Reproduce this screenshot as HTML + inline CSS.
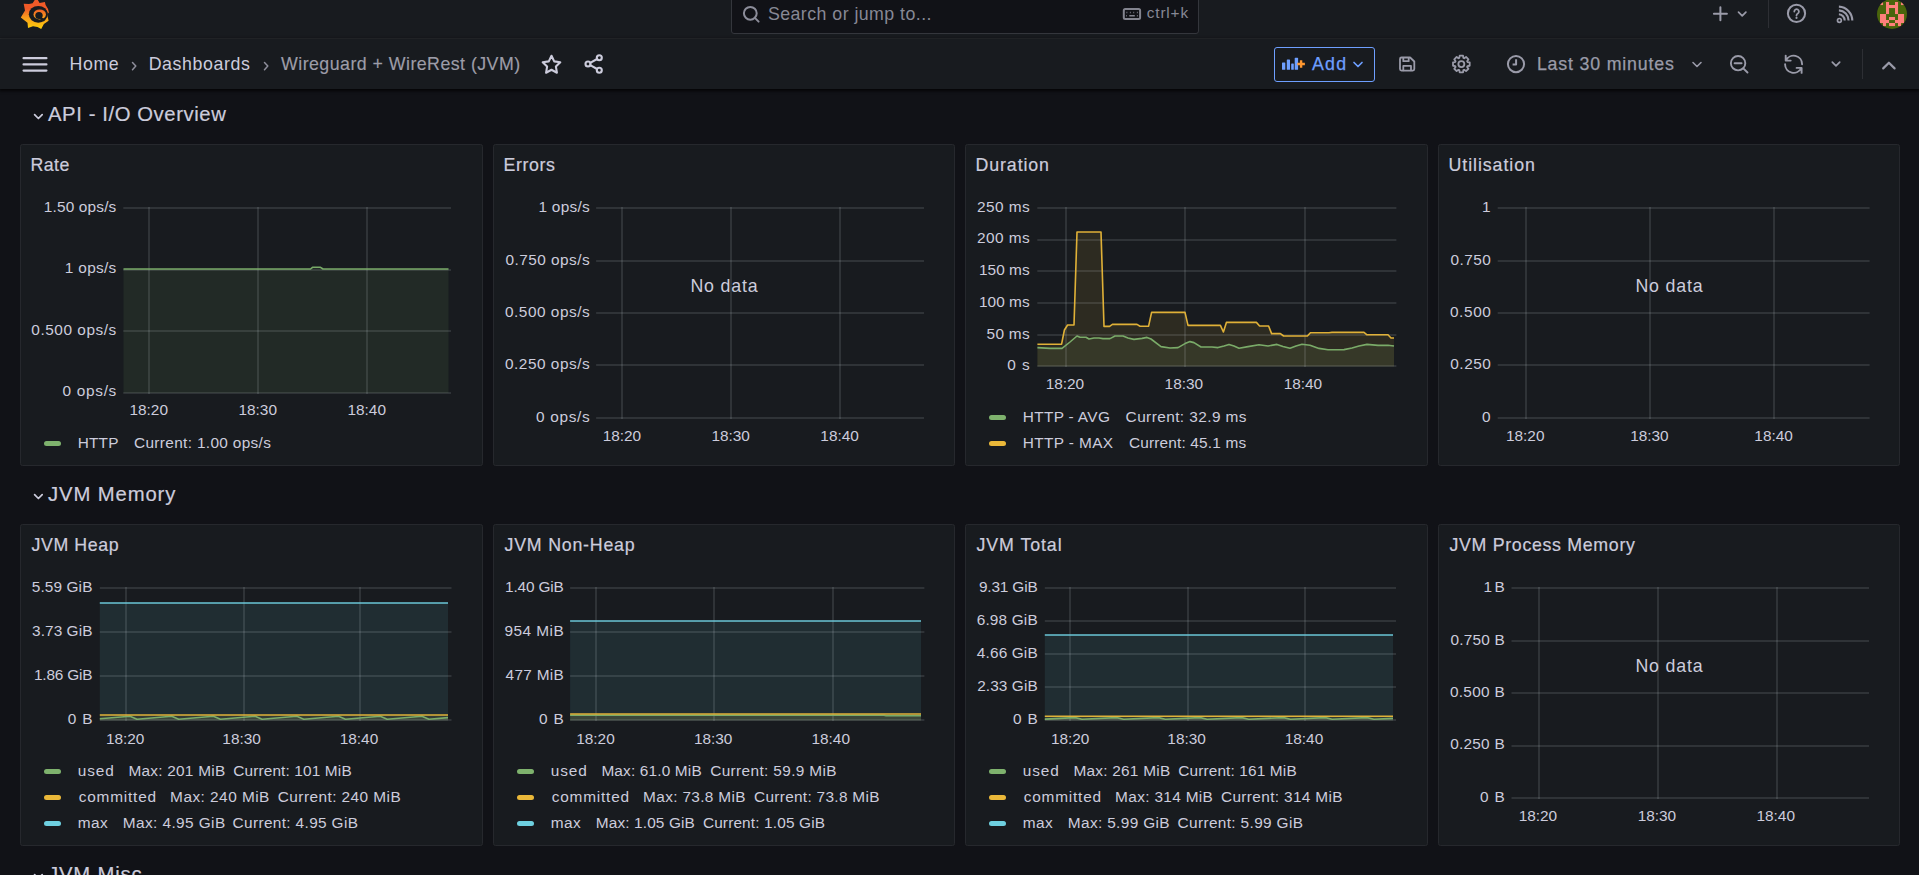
<!DOCTYPE html>
<html lang="en">
<head>
<meta charset="utf-8">
<title>Wireguard + WireRest (JVM) - Dashboards - Grafana</title>
<style>
*{box-sizing:border-box;margin:0;padding:0}
html,body{width:1919px;height:875px;overflow:hidden;background:#111217}
body{font-family:"Liberation Sans",sans-serif;color:#ccccdc;position:relative;-webkit-font-smoothing:antialiased}
.abs{position:absolute}
.t{position:absolute;white-space:pre;line-height:1}
#top{position:absolute;left:0;top:0;width:1919px;height:39px;background:#181b1f;border-bottom:1px solid #2e3035}
#nav{position:absolute;left:0;top:39px;width:1919px;height:50px;background:#181b1f;box-shadow:0 1px 3px 1px rgba(0,0,0,.75)}
#search{position:absolute;left:731px;top:-6px;width:468px;height:40px;background:#111217;border:1px solid #34363c;border-radius:3px}
.panel{position:absolute;background:#181b1f;border:1px solid #26282d;border-radius:2.5px}
.panel h2{position:absolute;font-size:17.8px;font-weight:400;line-height:18px;white-space:pre;-webkit-text-stroke:.2px #ccccdc}
h1,h2{font-weight:400}
svg{position:absolute;left:0;top:0;overflow:visible}
svg text{font-family:"Liberation Sans",sans-serif;font-size:15.4px;fill:#ccccdc}
.lg{position:absolute;font-size:15.4px;line-height:18px;white-space:pre}
.lg span{line-height:18px}
.lg i{position:absolute;height:5px;width:17px;border-radius:2.5px}
.nodata{position:absolute;font-size:17.8px;line-height:20px;white-space:pre}
.ic{position:absolute;overflow:visible;fill:none;stroke:#9a9ba9;stroke-width:1.9;stroke-linecap:round;stroke-linejoin:round}
</style>
</head>
<body>
<header id="top">
<svg class="abs" style="left:15px;top:0" width="40" height="35" viewBox="15 0 40 35">
<defs><linearGradient id="gl" gradientUnits="userSpaceOnUse" x1="0" y1="29" x2="0" y2="0"><stop offset="0" stop-color="#fcd00a"/><stop offset="0.4" stop-color="#f99b1c"/><stop offset="0.700" stop-color="#f05a28"/></linearGradient></defs>
<path fill="url(#gl)" d="M36.4 -2.5 L39.6 3 L44.9 1.9 L45.6 5 Q48.6 8.600 49.100 13.500 L47.500 12 L47.400 15.500 L48.600 20.800 L43.900 24 L41.200 29 L37.500 26.900 L33 26.200 L28 27.900 L27.500 22.800 L20.800 17.400 L25 10.600 L23.700 3.700 L29 4.100 L32.600 3.200 Z"/>
<ellipse cx="38.300" cy="14.300" rx="9.500" ry="8.400" fill="#181b1f"/>
<ellipse cx="39.700" cy="14.400" rx="6.200" ry="5" fill="url(#gl)"/>
<ellipse cx="39" cy="15.500" rx="3.700" ry="3.500" fill="#181b1f"/>
<path d="M40 17.800 L44.500 20.500" stroke="#181b1f" stroke-width="2.200" fill="none"/>
</svg>
<div id="search">
</div>
</header>
<svg class="ic" style="left:740px;top:0;stroke:#8c8d9a;stroke-width:2" width="24" height="26" viewBox="740 0 24 26"><circle cx="750.300" cy="13.300" r="6.400"/><path d="M754.900 17.900L758.600 21.600"/></svg>
<div class="t " style="top:6.13px;font-size:17.8px;color:#878895;left:767.90px;letter-spacing:0.446px;">Search or jump to...</div>
<svg class="ic" style="left:1120px;top:4px;stroke:#83848f;stroke-width:2" width="24" height="20" viewBox="1120 4 24 20"><rect x="1123.800" y="9.100" width="16.300" height="9.800" rx="1.500"/><path d="M1126.500 12.500h.8M1129.900 12.500h.8M1133.350 12.500h.8M1136.900 12.500h.8M1126.300 15.800h.7M1129.300 15.800h5.500M1136.900 15.800h.8" stroke-width="1.400" stroke-linecap="butt"/></svg>
<div class="t " style="top:5.36px;font-size:15.4px;color:#878895;left:1146.75px;letter-spacing:0.839px;">ctrl+k</div>
<svg class="ic" style="left:1700px;top:0;stroke-width:2" width="160" height="30" viewBox="1700 0 160 30"><path d="M1720.400 7.200v13M1713.900 13.700h13"/><path d="M1738.500 12.200l3.700 3.700 3.700-3.700" stroke-width="1.700"/><circle cx="1796.500" cy="13.400" r="8.600"/><path d="M1794.300 11.500a2.300 2.300 0 1 1 3.500 2c-.9.500-1.300 1-1.300 2.100" stroke-width="1.800"/><path d="M1796.500 17.800v.1" stroke-width="2.100"/><circle cx="1839.400" cy="20.400" r="1.900" stroke-width="1.700"/><path d="M1838.900 6.600a14 14 0 0 1 13.400 14M1838.900 10.400a10.200 10.200 0 0 1 9.700 10.200M1838.900 14.300a6.300 6.300 0 0 1 5.800 6.300" stroke-linecap="butt" stroke-width="2.100"/></svg>
<div class="abs" style="left:1768px;top:0;width:1px;height:28px;background:#2d2f34"></div>
<svg class="abs" style="left:1877px;top:-1px" width="30" height="30" viewBox="0 0 30 30"><defs><clipPath id="av"><circle cx="15" cy="15" r="15"/></clipPath></defs>
<g clip-path="url(#av)"><rect width="30" height="30" fill="#4a650c"/><g fill="#ff807b"><rect x="3" y="3" width="3.050" height="3.050"/><rect x="9" y="3" width="3.050" height="3.050"/><rect x="18" y="3" width="3.050" height="3.050"/><rect x="24" y="3" width="3.050" height="3.050"/><rect x="9" y="6" width="3.050" height="3.050"/><rect x="12" y="6" width="3.050" height="3.050"/><rect x="15" y="6" width="3.050" height="3.050"/><rect x="18" y="6" width="3.050" height="3.050"/><rect x="9" y="9" width="3.050" height="3.050"/><rect x="18" y="9" width="3.050" height="3.050"/><rect x="9" y="12" width="3.050" height="3.050"/><rect x="18" y="12" width="3.050" height="3.050"/><rect x="3" y="15" width="3.050" height="3.050"/><rect x="6" y="15" width="3.050" height="3.050"/><rect x="21" y="15" width="3.050" height="3.050"/><rect x="24" y="15" width="3.050" height="3.050"/><rect x="3" y="18" width="3.050" height="3.050"/><rect x="6" y="18" width="3.050" height="3.050"/><rect x="12" y="18" width="3.050" height="3.050"/><rect x="15" y="18" width="3.050" height="3.050"/><rect x="21" y="18" width="3.050" height="3.050"/><rect x="24" y="18" width="3.050" height="3.050"/><rect x="3" y="21" width="3.050" height="3.050"/><rect x="6" y="21" width="3.050" height="3.050"/><rect x="9" y="21" width="3.050" height="3.050"/><rect x="18" y="21" width="3.050" height="3.050"/><rect x="21" y="21" width="3.050" height="3.050"/><rect x="24" y="21" width="3.050" height="3.050"/><rect x="6" y="24" width="3.050" height="3.050"/><rect x="12" y="24" width="3.050" height="3.050"/><rect x="15" y="24" width="3.050" height="3.050"/><rect x="21" y="24" width="3.050" height="3.050"/></g></g></svg>
<nav id="nav"></nav>
<svg class="ic" style="left:22px;top:55px;stroke:#ccccdc;stroke-width:2.300" width="26" height="19" viewBox="22 55 26 19"><path d="M23.600 58.200H46.400M23.600 64.400H46.400M23.600 70.600H46.400"/></svg>
<div class="t " style="top:56.13px;font-size:17.8px;color:#ccccdc;left:69.60px;letter-spacing:0.536px;">Home</div>
<svg class="ic" style="left:131px;top:60.500px;stroke:#8e8e9b;stroke-width:1.500" width="7" height="11" viewBox="0 0 7 11"><path d="M1.500 1.500l3.300 3.600-3.300 3.600"/></svg>
<div class="t " style="top:56.13px;font-size:17.8px;color:#ccccdc;left:148.70px;letter-spacing:0.59px;">Dashboards</div>
<svg class="ic" style="left:263px;top:60.500px;stroke:#8e8e9b;stroke-width:1.500" width="7" height="11" viewBox="0 0 7 11"><path d="M1.500 1.500l3.300 3.600-3.300 3.600"/></svg>
<div class="t " style="top:56.13px;font-size:17.8px;color:#9d9da8;left:281.00px;letter-spacing:0.455px;-webkit-text-stroke:0.15px #9d9da8;">Wireguard + WireRest (JVM)</div>
<svg class="ic" style="left:541px;top:53.5px;stroke:#ccccdc;stroke-width:2.100" width="21" height="21" viewBox="0 0 21 21"><path d="M10.5 1.8l2.7 5.6 6.1.9-4.4 4.3 1 6.1-5.4-2.9-5.4 2.9 1-6.1-4.4-4.300 6.100-.9z"/></svg>
<svg class="ic" style="left:584px;top:54px;stroke:#ccccdc;stroke-width:2.100" width="20" height="20" viewBox="0 0 20 20"><circle cx="15.3" cy="3.800" r="2.500"/><circle cx="4" cy="10" r="2.500"/><circle cx="15.300" cy="16.200" r="2.500"/><path d="M6.200 8.800l6.900-3.800M6.200 11.200l6.900 3.800"/></svg>
<div class="abs" style="left:1274px;top:47px;width:101px;height:35px;border:1px solid #6e9fff;border-radius:3px"></div>
<svg class="abs" style="left:1280px;top:55px" width="28" height="18" viewBox="1280 55 28 18"><g fill="#6e9fff"><rect x="1282" y="62.400" width="3.300" height="7.400" rx=".6"/><rect x="1286.800" y="59.500" width="3.200" height="10.300" rx=".6"/><rect x="1291.200" y="63.500" width="2.600" height="6.300" rx=".6"/><rect x="1294.700" y="57.800" width="3.400" height="12" rx=".6"/></g><path d="M1301.100 60.200v7.600M1297.300 64h7.600" stroke="#ff9830" stroke-width="2.400" fill="none"/></svg>
<div class="t " style="top:56.13px;font-size:17.8px;color:#6e9fff;left:1312.00px;letter-spacing:1.225px;-webkit-text-stroke:0.25px #6e9fff;">Add</div>
<svg class="ic" style="left:1352.500px;top:60.500px;stroke:#6e9fff;stroke-width:1.7" width="10" height="7" viewBox="0 0 10 7"><path d="M1 1.500l4 4 4-4"/></svg>
<svg class="ic" style="left:1396px;top:54px;stroke-width:1.800" width="22" height="20" viewBox="1396 54 22 20"><path d="M1400 59a1.500 1.500 0 0 1 1.500-1.500h8.600l4.200 4v7.600a1.500 1.500 0 0 1-1.500 1.500h-11.300a1.500 1.500 0 0 1-1.500-1.500z"/><path d="M1403.300 57.800v3.400h5.400v-3.400M1403.300 70.300v-4.400h7.700v4.400"/></svg>
<svg class="ic" style="left:1450px;top:52px;stroke-width:1.800" width="24" height="24" viewBox="1450 52 24 24"><circle cx="1461.350" cy="64.050" r="3"/><path d="M1459.32 57.93 L1459.66 55.72 L1463.04 55.72 L1463.38 57.93 L1464.24 58.29 L1466.05 56.97 L1468.43 59.35 L1467.11 61.16 L1467.47 62.02 L1469.68 62.36 L1469.68 65.74 L1467.47 66.08 L1467.11 66.94 L1468.43 68.75 L1466.05 71.13 L1464.24 69.81 L1463.38 70.17 L1463.04 72.38 L1459.66 72.38 L1459.32 70.17 L1458.46 69.81 L1456.65 71.13 L1454.27 68.75 L1455.59 66.94 L1455.23 66.08 L1453.02 65.74 L1453.02 62.36 L1455.23 62.02 L1455.59 61.16 L1454.27 59.35 L1456.65 56.97 L1458.46 58.29Z"/></svg>
<svg class="ic" style="left:1500px;top:50px;stroke-width:2" width="32" height="28" viewBox="1500 50 32 28"><circle cx="1516" cy="64.100" r="8.100"/><path d="M1516.100 59.200v5.400h-3.500" stroke-linecap="butt"/></svg>
<div class="t " style="top:56.13px;font-size:17.8px;color:#9a9ba9;left:1536.90px;letter-spacing:0.819px;-webkit-text-stroke:0.25px #9a9ba9;">Last 30 minutes</div>
<svg class="ic" style="left:1692px;top:60.500px;stroke-width:1.600" width="10" height="7" viewBox="0 0 10 7"><path d="M1 1.500l4 4 4-4"/></svg>
<svg class="ic" style="left:1720px;top:40px;stroke-width:1.900" width="190" height="48" viewBox="1720 40 190 48"><circle cx="1738.100" cy="63.200" r="7.200"/><path d="M1743.300 68.400l4.200 4.100M1734.600 63.200h7"/><path d="M1785.950 60.500A8.500 8.500 0 0 1 1802.100 64.200M1785.700 55.600V60.600H1790.700M1801.300 67.900A8.500 8.500 0 0 1 1785.100 64.200M1801.600 72.900V67.900H1796.600"/><path d="M1832.300 62.100l3.700 3.700 3.700-3.700" stroke-width="1.700"/><path d="M1883.200 68.400l5.700-5.700 5.700 5.700" stroke-width="2.200"/></svg>
<div class="abs" style="left:1862px;top:49px;width:1px;height:30px;background:#2d2f34"></div>
<main>
<svg class="ic" style="left:32.500px;top:112.8px;stroke:#ccccdc;stroke-width:1.700" width="11" height="8" viewBox="0 0 11 8"><path d="M1.600 1.600l3.800 3.900 3.800-3.900"/></svg>
<h1 class="t " style="top:103.62px;font-size:20.3px;color:#ccccdc;left:48.00px;letter-spacing:0.581px;-webkit-text-stroke:0.2px #ccccdc;">API - I/O Overview</h1>
<svg class="ic" style="left:32.500px;top:492.8px;stroke:#ccccdc;stroke-width:1.700" width="11" height="8" viewBox="0 0 11 8"><path d="M1.600 1.600l3.800 3.900 3.800-3.900"/></svg>
<h1 class="t " style="top:483.62px;font-size:20.3px;color:#ccccdc;left:48.00px;letter-spacing:0.883px;-webkit-text-stroke:0.2px #ccccdc;">JVM Memory</h1>
<svg class="ic" style="left:32.500px;top:872.8px;stroke:#ccccdc;stroke-width:1.700" width="11" height="8" viewBox="0 0 11 8"><path d="M1.600 1.600l3.800 3.900 3.800-3.900"/></svg>
<h1 class="t " style="top:863.62px;font-size:20.3px;color:#ccccdc;left:48.00px;letter-spacing:0.809px;-webkit-text-stroke:0.2px #ccccdc;">JVM Misc</h1>
<section class="panel" style="left:20px;top:144px;width:463px;height:322px">
<h2 style="left:9.50px;top:10.93px;letter-spacing:0.410px">Rate</h2>
<svg width="460" height="320" viewBox="21 145 460 320">
<path d="M123.5 269.0 L310.5 269.0 L312.5 267.3 L320.5 267.3 L323.0 269.0 L448.5 269.0 L448.5 392.9 L123.5 392.9Z" fill="#7eb26d" fill-opacity="0.1"/>
<path d="M123.3 208H451.0M123.3 270H451.0M123.3 331H451.0M123.3 393H451.0" stroke="rgba(235,245,255,0.108)" stroke-width="2" fill="none"/>
<path d="M149 207V394M258 207V394M367 207V394" stroke="rgba(235,245,255,0.108)" stroke-width="2" fill="none"/>
<path d="M123.5 269.0 L310.5 269.0 L312.5 267.3 L320.5 267.3 L323.0 269.0 L448.5 269.0" fill="none" stroke="#7eb26d" stroke-opacity="0.950" stroke-width="1.6" stroke-linejoin="round"/>
<text x="116.3" y="211.9" text-anchor="end" textLength="72.5">1.50 ops/s</text>
<text x="116.3" y="273.4" text-anchor="end" textLength="51.5">1 ops/s</text>
<text x="116.3" y="334.9" text-anchor="end" textLength="85.0">0.500 ops/s</text>
<text x="116.3" y="396.3" text-anchor="end" textLength="53.7">0 ops/s</text>
<text x="129.55" y="415.1" textLength="38.400">18:20</text>
<text x="238.55" y="415.1" textLength="38.400">18:30</text>
<text x="347.55" y="415.1" textLength="38.400">18:40</text>
</svg>
<div class="lg" style="left:0;top:289.5px"><i style="background:#7eb26d;left:23.0px;top:6.500px"></i><span class="abs" style="left:56.75px;top:-0.640px;letter-spacing:0.161px">HTTP</span><span class="abs" style="left:113.00px;top:-0.640px;letter-spacing:0.334px">Current: 1.00 ops/s</span></div>
</section>
<section class="panel" style="left:493px;top:144px;width:462px;height:322px">
<h2 style="left:9.50px;top:10.93px;letter-spacing:0.577px">Errors</h2>
<svg width="460" height="320" viewBox="494 145 460 320">
<path d="M596.1 208H924.0M596.1 261H924.0M596.1 313H924.0M596.1 365H924.0M596.1 418H924.0" stroke="rgba(235,245,255,0.108)" stroke-width="2" fill="none"/>
<path d="M622 207V419M731 207V419M840 207V419" stroke="rgba(235,245,255,0.108)" stroke-width="2" fill="none"/>
<text x="589.7" y="211.9" text-anchor="end" textLength="51.3">1 ops/s</text>
<text x="589.7" y="264.6" text-anchor="end" textLength="84.2">0.750 ops/s</text>
<text x="589.7" y="316.9" text-anchor="end" textLength="84.7">0.500 ops/s</text>
<text x="589.7" y="369.3" text-anchor="end" textLength="84.7">0.250 ops/s</text>
<text x="589.7" y="421.7" text-anchor="end" textLength="53.7">0 ops/s</text>
<text x="602.65" y="441.2" textLength="38.400">18:20</text>
<text x="711.45" y="441.2" textLength="38.400">18:30</text>
<text x="820.35" y="441.2" textLength="38.400">18:40</text>
</svg>
<div class="nodata" style="left:196.40px;top:130.63px;letter-spacing:0.819px">No data</div>
</section>
<section class="panel" style="left:965px;top:144px;width:463px;height:322px">
<h2 style="left:9.50px;top:10.93px;letter-spacing:0.897px">Duration</h2>
<svg width="460" height="320" viewBox="966 145 460 320">
<path d="M1037.4 347.6 L1050.0 348.4 L1062.0 348.4 L1070.0 342.0 L1077.0 336.0 L1080.0 337.2 L1086.0 337.2 L1089.0 339.0 L1094.0 338.0 L1099.0 338.0 L1103.0 338.6 L1110.0 338.6 L1115.0 336.0 L1123.0 336.0 L1128.0 338.0 L1134.0 339.4 L1142.0 338.4 L1147.0 337.4 L1151.0 339.0 L1161.0 346.6 L1170.0 348.0 L1178.0 347.6 L1185.0 343.6 L1190.0 341.6 L1194.0 342.6 L1201.0 347.0 L1212.0 347.0 L1218.0 347.6 L1224.0 346.0 L1229.0 344.4 L1234.0 346.0 L1239.0 348.2 L1248.0 346.6 L1259.0 344.8 L1268.0 346.0 L1277.0 344.4 L1283.0 346.4 L1290.0 348.2 L1296.0 346.0 L1302.0 344.2 L1310.0 345.2 L1319.0 348.4 L1328.0 349.8 L1344.0 349.6 L1352.0 348.0 L1359.0 346.0 L1367.0 344.4 L1378.0 345.4 L1388.0 345.2 L1394.0 346.0 L1394.0 366.4 L1037.4 366.4Z" fill="#7eb26d" fill-opacity="0.1"/>
<path d="M1037.4 344.2 L1061.6 344.2 L1064.4 330.0 L1067.6 325.0 L1074.0 325.0 L1077.0 232.0 L1101.0 232.0 L1104.0 326.4 L1109.6 326.4 L1112.4 324.4 L1137.0 324.4 L1140.0 326.2 L1148.6 326.2 L1151.6 312.4 L1185.0 312.4 L1188.0 325.4 L1220.4 325.4 L1223.4 332.0 L1226.4 322.4 L1256.4 322.4 L1259.6 326.0 L1268.6 326.0 L1271.6 333.6 L1280.4 333.6 L1283.6 336.0 L1307.4 336.0 L1310.4 332.8 L1329.0 332.8 L1332.0 332.4 L1364.0 332.4 L1367.0 334.8 L1388.0 334.8 L1391.0 338.0 L1394.0 338.0 L1394.0 366.4 L1037.4 366.4Z" fill="#eab839" fill-opacity="0.1"/>
<path d="M1037.3 208H1396.4M1037.3 240H1396.4M1037.3 271H1396.4M1037.3 303H1396.4M1037.3 335H1396.4M1037.3 366H1396.4" stroke="rgba(235,245,255,0.108)" stroke-width="2" fill="none"/>
<path d="M1066 207V367M1185 207V367M1305 207V367" stroke="rgba(235,245,255,0.108)" stroke-width="2" fill="none"/>
<path d="M1037.4 347.6 L1050.0 348.4 L1062.0 348.4 L1070.0 342.0 L1077.0 336.0 L1080.0 337.2 L1086.0 337.2 L1089.0 339.0 L1094.0 338.0 L1099.0 338.0 L1103.0 338.6 L1110.0 338.6 L1115.0 336.0 L1123.0 336.0 L1128.0 338.0 L1134.0 339.4 L1142.0 338.4 L1147.0 337.4 L1151.0 339.0 L1161.0 346.6 L1170.0 348.0 L1178.0 347.6 L1185.0 343.6 L1190.0 341.6 L1194.0 342.6 L1201.0 347.0 L1212.0 347.0 L1218.0 347.6 L1224.0 346.0 L1229.0 344.4 L1234.0 346.0 L1239.0 348.2 L1248.0 346.6 L1259.0 344.8 L1268.0 346.0 L1277.0 344.4 L1283.0 346.4 L1290.0 348.2 L1296.0 346.0 L1302.0 344.2 L1310.0 345.2 L1319.0 348.4 L1328.0 349.8 L1344.0 349.6 L1352.0 348.0 L1359.0 346.0 L1367.0 344.4 L1378.0 345.4 L1388.0 345.2 L1394.0 346.0" fill="none" stroke="#7eb26d" stroke-opacity="0.950" stroke-width="1.6" stroke-linejoin="round"/>
<path d="M1037.4 344.2 L1061.6 344.2 L1064.4 330.0 L1067.6 325.0 L1074.0 325.0 L1077.0 232.0 L1101.0 232.0 L1104.0 326.4 L1109.6 326.4 L1112.4 324.4 L1137.0 324.4 L1140.0 326.2 L1148.6 326.2 L1151.6 312.4 L1185.0 312.4 L1188.0 325.4 L1220.4 325.4 L1223.4 332.0 L1226.4 322.4 L1256.4 322.4 L1259.6 326.0 L1268.6 326.0 L1271.6 333.6 L1280.4 333.6 L1283.6 336.0 L1307.4 336.0 L1310.4 332.8 L1329.0 332.8 L1332.0 332.4 L1364.0 332.4 L1367.0 334.8 L1388.0 334.8 L1391.0 338.0 L1394.0 338.0" fill="none" stroke="#eab839" stroke-opacity="0.950" stroke-width="1.6" stroke-linejoin="round"/>
<text x="1029.7" y="211.9" text-anchor="end" textLength="52.7">250 ms</text>
<text x="1029.7" y="243.4" text-anchor="end" textLength="52.7">200 ms</text>
<text x="1029.7" y="275.0" text-anchor="end" textLength="50.8">150 ms</text>
<text x="1029.7" y="306.9" text-anchor="end" textLength="50.8">100 ms</text>
<text x="1029.7" y="338.6" text-anchor="end" textLength="43.2">50 ms</text>
<text x="1029.7" y="370.3" text-anchor="end" textLength="22.4">0 s</text>
<text x="1045.75" y="388.9" textLength="38.400">18:20</text>
<text x="1164.60" y="388.9" textLength="38.400">18:30</text>
<text x="1283.75" y="388.9" textLength="38.400">18:40</text>
</svg>
<div class="lg" style="left:0;top:263.5px"><i style="background:#7eb26d;left:23.0px;top:6.500px"></i><span class="abs" style="left:56.70px;top:-0.640px;letter-spacing:0.350px">HTTP - AVG</span><span class="abs" style="left:159.60px;top:-0.640px;letter-spacing:0.418px">Current: 32.9 ms</span></div>
<div class="lg" style="left:0;top:289.4px"><i style="background:#eab839;left:23.0px;top:6.500px"></i><span class="abs" style="left:56.70px;top:-0.640px;letter-spacing:0.384px">HTTP - MAX</span><span class="abs" style="left:162.90px;top:-0.640px;letter-spacing:0.178px">Current: 45.1 ms</span></div>
</section>
<section class="panel" style="left:1438px;top:144px;width:462px;height:322px">
<h2 style="left:9.50px;top:10.93px;letter-spacing:0.931px">Utilisation</h2>
<svg width="460" height="320" viewBox="1439 145 460 320">
<path d="M1497.7 208H1869.6M1497.7 261H1869.6M1497.7 313H1869.6M1497.7 365H1869.6M1497.7 418H1869.6" stroke="rgba(235,245,255,0.108)" stroke-width="2" fill="none"/>
<path d="M1526 207V419M1650 207V419M1774 207V419" stroke="rgba(235,245,255,0.108)" stroke-width="2" fill="none"/>
<text x="1490.9" y="211.9" text-anchor="end" letter-spacing="0.400">1</text>
<text x="1490.9" y="264.6" text-anchor="end" textLength="40.4">0.750</text>
<text x="1490.9" y="316.9" text-anchor="end" textLength="41.0">0.500</text>
<text x="1490.9" y="369.3" text-anchor="end" textLength="40.7">0.250</text>
<text x="1490.9" y="421.7" text-anchor="end" letter-spacing="0.400">0</text>
<text x="1506.05" y="441.2" textLength="38.400">18:20</text>
<text x="1630.20" y="441.2" textLength="38.400">18:30</text>
<text x="1754.35" y="441.2" textLength="38.400">18:40</text>
</svg>
<div class="nodata" style="left:196.40px;top:130.63px;letter-spacing:0.819px">No data</div>
</section>
<section class="panel" style="left:20px;top:524px;width:463px;height:322px">
<h2 style="left:10.50px;top:10.93px;letter-spacing:0.590px">JVM Heap</h2>
<svg width="460" height="320" viewBox="21 525 460 320">
<path d="M99.8 718.8 L130.0 716.3 L137.0 719.2 L171.7 716.3 L178.7 719.2 L213.4 716.3 L220.4 719.2 L255.1 716.3 L262.1 719.2 L296.8 716.3 L303.8 719.2 L338.5 716.3 L345.5 719.2 L380.2 716.3 L387.2 719.2 L421.9 716.3 L428.9 719.2 L448.0 717.6 L448.0 720.5 L99.8 720.5Z" fill="#7eb26d" fill-opacity="0.1"/>
<path d="M99.8 715.0 L448.0 715.0 L448.0 720.5 L99.8 720.5Z" fill="#eab839" fill-opacity="0.1"/>
<path d="M99.8 603.0 L448.0 603.0 L448.0 720.5 L99.8 720.5Z" fill="#6ed0e0" fill-opacity="0.1"/>
<path d="M99.8 588H451.5M99.8 632H451.5M99.8 676H451.5M99.8 720H451.5" stroke="rgba(235,245,255,0.108)" stroke-width="2" fill="none"/>
<path d="M126 587V721M244 587V721M360 587V721" stroke="rgba(235,245,255,0.108)" stroke-width="2" fill="none"/>
<path d="M99.8 718.8 L130.0 716.3 L137.0 719.2 L171.7 716.3 L178.7 719.2 L213.4 716.3 L220.4 719.2 L255.1 716.3 L262.1 719.2 L296.8 716.3 L303.8 719.2 L338.5 716.3 L345.5 719.2 L380.2 716.3 L387.2 719.2 L421.9 716.3 L428.9 719.2 L448.0 717.6" fill="none" stroke="#7eb26d" stroke-opacity="0.950" stroke-width="1.6" stroke-linejoin="round"/>
<path d="M99.8 715.0 L448.0 715.0" fill="none" stroke="#eab839" stroke-opacity="0.950" stroke-width="1.6" stroke-linejoin="round"/>
<path d="M99.8 603.0 L448.0 603.0" fill="none" stroke="#6ed0e0" stroke-opacity="0.950" stroke-width="1.6" stroke-linejoin="round"/>
<text x="92.4" y="592.1" text-anchor="end" textLength="60.6">5.59 GiB</text>
<text x="92.4" y="635.9" text-anchor="end" textLength="60.3">3.73 GiB</text>
<text x="92.4" y="680.1" text-anchor="end" textLength="58.4">1.86 GiB</text>
<text x="92.4" y="724.4" text-anchor="end" textLength="24.7">0 B</text>
<text x="105.90" y="743.9" textLength="38.400">18:20</text>
<text x="222.35" y="743.9" textLength="38.400">18:30</text>
<text x="339.80" y="743.9" textLength="38.400">18:40</text>
</svg>
<div class="lg" style="left:0;top:237.4px"><i style="background:#7eb26d;left:23.0px;top:6.500px"></i><span class="abs" style="left:56.80px;top:-0.640px;letter-spacing:0.862px">used</span><span class="abs" style="left:107.40px;top:-0.640px;letter-spacing:0.243px">Max: 201 MiB</span><span class="abs" style="left:212.20px;top:-0.640px;letter-spacing:0.142px">Current: 101 MiB</span></div>
<div class="lg" style="left:0;top:263.4px"><i style="background:#eab839;left:23.0px;top:6.500px"></i><span class="abs" style="left:57.80px;top:-0.640px;letter-spacing:0.784px">committed</span><span class="abs" style="left:149.10px;top:-0.640px;letter-spacing:0.471px">Max: 240 MiB</span><span class="abs" style="left:256.80px;top:-0.640px;letter-spacing:0.436px">Current: 240 MiB</span></div>
<div class="lg" style="left:0;top:289.5px"><i style="background:#6ed0e0;left:23.0px;top:6.500px"></i><span class="abs" style="left:56.80px;top:-0.640px;letter-spacing:0.410px">max</span><span class="abs" style="left:101.80px;top:-0.640px;letter-spacing:0.404px">Max: 4.95 GiB</span><span class="abs" style="left:211.60px;top:-0.640px;letter-spacing:0.350px">Current: 4.95 GiB</span></div>
</section>
<section class="panel" style="left:493px;top:524px;width:462px;height:322px">
<h2 style="left:10.50px;top:10.93px;letter-spacing:0.781px">JVM Non-Heap</h2>
<svg width="460" height="320" viewBox="494 525 460 320">
<path d="M570.1 715.3 L884.0 715.3 L886.0 715.7 L921.0 715.7 L921.0 720.5 L570.1 720.5Z" fill="#7eb26d" fill-opacity="0.1"/>
<path d="M570.1 714.0 L921.0 714.0 L921.0 720.5 L570.1 720.5Z" fill="#eab839" fill-opacity="0.1"/>
<path d="M570.1 621.0 L921.0 621.0 L921.0 720.5 L570.1 720.5Z" fill="#6ed0e0" fill-opacity="0.1"/>
<path d="M570.1 588H924.4M570.1 632H924.4M570.1 676H924.4M570.1 720H924.4" stroke="rgba(235,245,255,0.108)" stroke-width="2" fill="none"/>
<path d="M596 587V721M714 587V721M833 587V721" stroke="rgba(235,245,255,0.108)" stroke-width="2" fill="none"/>
<path d="M570.1 715.3 L884.0 715.3 L886.0 715.7 L921.0 715.7" fill="none" stroke="#7eb26d" stroke-opacity="0.950" stroke-width="1.6" stroke-linejoin="round"/>
<path d="M570.1 714.0 L921.0 714.0" fill="none" stroke="#eab839" stroke-opacity="0.950" stroke-width="1.6" stroke-linejoin="round"/>
<path d="M570.1 621.0 L921.0 621.0" fill="none" stroke="#6ed0e0" stroke-opacity="0.950" stroke-width="1.6" stroke-linejoin="round"/>
<text x="563.7" y="592.1" text-anchor="end" textLength="58.7">1.40 GiB</text>
<text x="563.7" y="635.9" text-anchor="end" textLength="59.3">954 MiB</text>
<text x="563.7" y="680.1" text-anchor="end" textLength="58.1">477 MiB</text>
<text x="563.7" y="724.4" text-anchor="end" textLength="24.7">0 B</text>
<text x="576.30" y="743.9" textLength="38.400">18:20</text>
<text x="694.00" y="743.9" textLength="38.400">18:30</text>
<text x="811.55" y="743.9" textLength="38.400">18:40</text>
</svg>
<div class="lg" style="left:0;top:237.4px"><i style="background:#7eb26d;left:23.0px;top:6.500px"></i><span class="abs" style="left:56.80px;top:-0.640px;letter-spacing:0.862px">used</span><span class="abs" style="left:107.40px;top:-0.640px;letter-spacing:0.159px">Max: 61.0 MiB</span><span class="abs" style="left:216.20px;top:-0.640px;letter-spacing:0.360px">Current: 59.9 MiB</span></div>
<div class="lg" style="left:0;top:263.4px"><i style="background:#eab839;left:23.0px;top:6.500px"></i><span class="abs" style="left:57.80px;top:-0.640px;letter-spacing:0.784px">committed</span><span class="abs" style="left:149.10px;top:-0.640px;letter-spacing:0.334px">Max: 73.8 MiB</span><span class="abs" style="left:260.00px;top:-0.640px;letter-spacing:0.304px">Current: 73.8 MiB</span></div>
<div class="lg" style="left:0;top:289.5px"><i style="background:#6ed0e0;left:23.0px;top:6.500px"></i><span class="abs" style="left:56.80px;top:-0.640px;letter-spacing:0.410px">max</span><span class="abs" style="left:101.80px;top:-0.640px;letter-spacing:0.129px">Max: 1.05 GiB</span><span class="abs" style="left:208.90px;top:-0.640px;letter-spacing:0.150px">Current: 1.05 GiB</span></div>
</section>
<section class="panel" style="left:965px;top:524px;width:463px;height:322px">
<h2 style="left:10.50px;top:10.93px;letter-spacing:0.924px">JVM Total</h2>
<svg width="460" height="320" viewBox="966 525 460 320">
<path d="M1044.8 719.1 L1075.0 717.6 L1082.0 719.3 L1116.7 717.6 L1123.7 719.3 L1158.4 717.6 L1165.4 719.3 L1200.1 717.6 L1207.1 719.3 L1241.8 717.6 L1248.8 719.3 L1283.5 717.6 L1290.5 719.3 L1325.2 717.6 L1332.2 719.3 L1366.9 717.6 L1373.9 719.3 L1393.0 718.4 L1393.0 720.5 L1044.8 720.5Z" fill="#7eb26d" fill-opacity="0.1"/>
<path d="M1044.8 716.3 L1393.0 716.3 L1393.0 720.5 L1044.8 720.5Z" fill="#eab839" fill-opacity="0.1"/>
<path d="M1044.8 635.0 L1393.0 635.0 L1393.0 720.5 L1044.8 720.5Z" fill="#6ed0e0" fill-opacity="0.1"/>
<path d="M1044.8 588H1396.0M1044.8 621H1396.0M1044.8 654H1396.0M1044.8 687H1396.0M1044.8 720H1396.0" stroke="rgba(235,245,255,0.108)" stroke-width="2" fill="none"/>
<path d="M1070 587V721M1188 587V721M1305 587V721" stroke="rgba(235,245,255,0.108)" stroke-width="2" fill="none"/>
<path d="M1044.8 719.1 L1075.0 717.6 L1082.0 719.3 L1116.7 717.6 L1123.7 719.3 L1158.4 717.6 L1165.4 719.3 L1200.1 717.6 L1207.1 719.3 L1241.8 717.6 L1248.8 719.3 L1283.5 717.6 L1290.5 719.3 L1325.2 717.6 L1332.2 719.3 L1366.9 717.6 L1373.9 719.3 L1393.0 718.4" fill="none" stroke="#7eb26d" stroke-opacity="0.950" stroke-width="1.6" stroke-linejoin="round"/>
<path d="M1044.8 716.3 L1393.0 716.3" fill="none" stroke="#eab839" stroke-opacity="0.950" stroke-width="1.6" stroke-linejoin="round"/>
<path d="M1044.8 635.0 L1393.0 635.0" fill="none" stroke="#6ed0e0" stroke-opacity="0.950" stroke-width="1.6" stroke-linejoin="round"/>
<text x="1037.7" y="592.1" text-anchor="end" textLength="58.8">9.31 GiB</text>
<text x="1037.7" y="624.9" text-anchor="end" textLength="61.0">6.98 GiB</text>
<text x="1037.7" y="657.7" text-anchor="end" textLength="60.9">4.66 GiB</text>
<text x="1037.7" y="691.1" text-anchor="end" textLength="60.5">2.33 GiB</text>
<text x="1037.7" y="724.4" text-anchor="end" textLength="24.7">0 B</text>
<text x="1050.90" y="743.9" textLength="38.400">18:20</text>
<text x="1167.35" y="743.9" textLength="38.400">18:30</text>
<text x="1284.80" y="743.9" textLength="38.400">18:40</text>
</svg>
<div class="lg" style="left:0;top:237.4px"><i style="background:#7eb26d;left:23.0px;top:6.500px"></i><span class="abs" style="left:56.80px;top:-0.640px;letter-spacing:0.862px">used</span><span class="abs" style="left:107.40px;top:-0.640px;letter-spacing:0.243px">Max: 261 MiB</span><span class="abs" style="left:212.20px;top:-0.640px;letter-spacing:0.142px">Current: 161 MiB</span></div>
<div class="lg" style="left:0;top:263.4px"><i style="background:#eab839;left:23.0px;top:6.500px"></i><span class="abs" style="left:57.80px;top:-0.640px;letter-spacing:0.784px">committed</span><span class="abs" style="left:149.10px;top:-0.640px;letter-spacing:0.334px">Max: 314 MiB</span><span class="abs" style="left:255.00px;top:-0.640px;letter-spacing:0.349px">Current: 314 MiB</span></div>
<div class="lg" style="left:0;top:289.5px"><i style="background:#6ed0e0;left:23.0px;top:6.500px"></i><span class="abs" style="left:56.80px;top:-0.640px;letter-spacing:0.410px">max</span><span class="abs" style="left:101.80px;top:-0.640px;letter-spacing:0.354px">Max: 5.99 GiB</span><span class="abs" style="left:211.60px;top:-0.640px;letter-spacing:0.350px">Current: 5.99 GiB</span></div>
</section>
<section class="panel" style="left:1438px;top:524px;width:462px;height:322px">
<h2 style="left:10.50px;top:10.93px;letter-spacing:0.677px">JVM Process Memory</h2>
<svg width="460" height="320" viewBox="1439 525 460 320">
<path d="M1511.5 588H1869.0M1511.5 641H1869.0M1511.5 693H1869.0M1511.5 746H1869.0M1511.5 798H1869.0" stroke="rgba(235,245,255,0.108)" stroke-width="2" fill="none"/>
<path d="M1539 587V799M1658 587V799M1777 587V799" stroke="rgba(235,245,255,0.108)" stroke-width="2" fill="none"/>
<text x="1504.7" y="592.1" text-anchor="end" textLength="21.3">1 B</text>
<text x="1504.7" y="644.6" text-anchor="end" textLength="54.2">0.750 B</text>
<text x="1504.7" y="697.0" text-anchor="end" textLength="54.8">0.500 B</text>
<text x="1504.7" y="749.4" text-anchor="end" textLength="54.5">0.250 B</text>
<text x="1504.7" y="801.9" text-anchor="end" textLength="24.7">0 B</text>
<text x="1518.70" y="821.4" textLength="38.400">18:20</text>
<text x="1637.75" y="821.4" textLength="38.400">18:30</text>
<text x="1756.55" y="821.4" textLength="38.400">18:40</text>
</svg>
<div class="nodata" style="left:196.40px;top:130.93px;letter-spacing:0.819px">No data</div>
</section>
</main>
</body>
</html>
